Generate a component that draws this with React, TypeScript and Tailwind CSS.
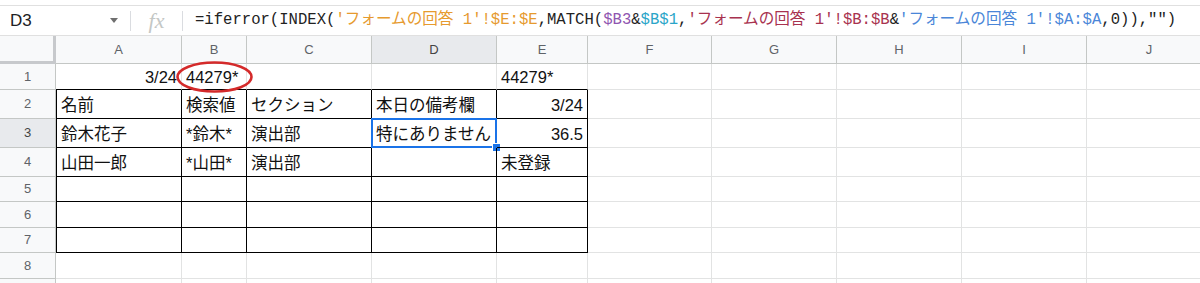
import React from "react";

const COLS = ["A", "B", "C", "D", "E", "F", "G", "H", "I", "J"];
const ROWS = [1, 2, 3, 4, 5, 6, 7, 8, 9];

type CellData = { t: string; right?: boolean };
const DATA: Record<string, CellData> = {
  A1: { t: "3/24", right: true },
  B1: { t: "44279*" },
  E1: { t: "44279*" },
  A2: { t: "名前" },
  B2: { t: "検索値" },
  C2: { t: "セクション" },
  D2: { t: "本日の備考欄" },
  E2: { t: "3/24", right: true },
  A3: { t: "鈴木花子" },
  B3: { t: "*鈴木*" },
  C3: { t: "演出部" },
  D3: { t: "特にありません" },
  E3: { t: "36.5", right: true },
  A4: { t: "山田一郎" },
  B4: { t: "*山田*" },
  C4: { t: "演出部" },
  E4: { t: "未登録" },
};

function cellClass(ci: number, r: number): string {
  const inTableCol = ci <= 4;
  const parts: string[] = [
    "relative flex items-center px-[4px] overflow-visible whitespace-nowrap border-b border-r",
  ];
  if (inTableCol && r >= 1 && r <= 7) parts.push("border-b-black");
  else parts.push("border-b-[#e2e3e3]");
  if (inTableCol && r >= 2 && r <= 7) parts.push("border-r-black");
  else parts.push("border-r-[#e2e3e3]");
  if (ci === 0 && r >= 2 && r <= 7) parts.push("border-l border-l-black");
  return parts.join(" ");
}

const F = "text-[#222]";
const ORANGE = "text-[#e69a2e]";
const PURPLE = "text-[#8f55b0]";
const TEAL = "text-[#2aa5c8]";
const CRIMSON = "text-[#a8324f]";
const BLUE = "text-[#4a86d8]";

export default function App() {
  return (
    <div className="w-[1200px] h-[283px] overflow-hidden bg-white font-['Liberation_Sans','Noto_Sans_CJK_JP',sans-serif]">
      <div className="h-[5px] bg-white" />
      {/* formula bar */}
      <div className="h-[31px] flex items-center border-t border-b border-[#e0e0e0]">
        <div className="w-[130px] h-full flex items-center justify-between pl-[10px] pr-[12px]">
          <span className="text-[17px] text-[#202124]">D3</span>
          <svg width="8" height="5" viewBox="0 0 8 5">
            <path d="M0 0 L8 0 L4 5 Z" fill="#6f6f6f" />
          </svg>
        </div>
        <div className="w-px h-[20px] bg-[#dadce0]" />
        <div className="w-[51px] flex items-center justify-center">
          <span className="font-['Liberation_Serif',serif] italic text-[22px] text-[#c4c7c5] leading-none">
            fx
          </span>
        </div>
        <div className="w-px h-[20px] bg-[#dadce0]" />
        <div className="pl-[12px] whitespace-nowrap font-['Liberation_Mono','Noto_Sans_CJK_JP',monospace] text-[15.6px] text-[#222]">
          <span className={F}>=iferror(INDEX(</span>
          <span className={ORANGE}>'フォームの回答 1'!$E:$E</span>
          <span className={F}>,MATCH(</span>
          <span className={PURPLE}>$B3</span>
          <span className={F}>&amp;</span>
          <span className={TEAL}>$B$1</span>
          <span className={F}>,</span>
          <span className={CRIMSON}>'フォームの回答 1'!$B:$B</span>
          <span className={F}>&amp;</span>
          <span className={BLUE}>'フォームの回答 1'!$A:$A</span>
          <span className={F}>,0)),"")</span>
        </div>
      </div>

      {/* grid */}
      <div className="relative grid grid-cols-[56px_126px_65px_125px_125px_91px_124px_125px_125px_125px_125px] grid-rows-[28px_26px_29px_29px_29px_25px_26px_25px_26px_26px]">
        {/* header row */}
        <div className="bg-[#f8f9fa] border-r-[3px] border-b-[3px] border-[#c7c9cc]" />
        {COLS.map((c) => (
          <div
            key={c}
            className={
              c === "D"
                ? "flex items-center justify-center bg-[#e8eaed] border-r border-b border-[#c4c7c5] text-[13px] text-[#444]"
                : "flex items-center justify-center bg-[#f8f9fa] border-r border-b border-[#c4c7c5] text-[13px] text-[#5f6368]"
            }
          >
            {c}
          </div>
        ))}
        {ROWS.map((r) => (
          <React.Fragment key={r}>
            <div
              className={
                r === 3
                  ? "flex items-center justify-center bg-[#e8eaed] border-r border-b border-[#c4c7c5] text-[13px] text-[#444]"
                  : "flex items-center justify-center bg-[#f8f9fa] border-r border-b border-[#c4c7c5] text-[13px] text-[#5f6368]"
              }
            >
              {r <= 8 ? r : ""}
            </div>
            {COLS.map((c, ci) => {
              const d = DATA[`${c}${r}`];
              const sel = c === "D" && r === 3;
              return (
                <div key={c} className={cellClass(ci, r)}>
                  {d && (
                    <span
                      className={
                        d.right
                          ? "ml-auto text-[16.5px] text-[#111] leading-none pt-[2px]"
                          : "text-[16.5px] text-[#111] leading-none pt-[2px]"
                      }
                    >
                      {d.t}
                    </span>
                  )}
                  {sel && (
                    <>
                      <div className="absolute -left-px -top-px right-[-1px] bottom-[-1px] border-2 border-[#1a73e8] pointer-events-none" />
                      <div className="absolute right-[-5px] bottom-[-5px] w-[9px] h-[9px] bg-[#1a73e8] border border-white" />
                    </>
                  )}
                </div>
              );
            })}
          </React.Fragment>
        ))}

        {/* red annotation ellipse */}
        <svg
          className="absolute left-[175px] top-[24px] pointer-events-none"
          width="80"
          height="34"
          viewBox="0 0 80 34"
        >
          <ellipse cx="39.5" cy="17" rx="37" ry="14.5" fill="none" stroke="#d42a2a" strokeWidth="2.6" />
        </svg>
      </div>
    </div>
  );
}
